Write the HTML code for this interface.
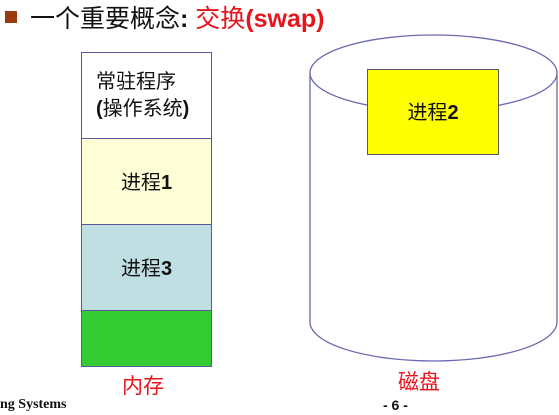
<!DOCTYPE html>
<html><head><meta charset="utf-8"><style>
body{margin:0;width:559px;height:415px;background:#fff;position:relative;overflow:hidden;font-family:"Liberation Sans","Noto Sans CJK SC",sans-serif}
.a{position:absolute}
.box{position:absolute;left:81px;width:131px;border-left:1.5px solid #5a5a9a;border-right:1.5px solid #5a5a9a;border-top:1.5px solid #5a5a9a;box-sizing:border-box;font-size:20px;color:#111;text-align:center}
.box span{display:block;line-height:24px}
</style></head><body>
<div class="a" style="left:5px;top:11px;width:12px;height:12px;background:#9b3a0e"></div>
<div class="a" style="left:30px;top:3px;font-size:25px;line-height:32px;color:#111;white-space:nowrap">一个重要概念<b>:</b> <span style="color:#e8141c">交换<b>(swap)</b></span></div>
<div class="box" style="top:52px;height:87px;background:#fff;text-align:left;padding:16px 0 0 14px"><span style="line-height:27px">常驻程序</span><span style="line-height:27px"><b>(</b>操作系统<b>)</b></span></div>
<div class="box" style="top:138px;height:87px;background:#fdfdd6;padding-top:32px"><span>进程<b>1</b></span></div>
<div class="box" style="top:224px;height:87px;background:#c0dfe2;padding-top:32px"><span>进程<b>3</b></span></div>
<div class="box" style="top:310px;height:57px;background:#33cc33;border-bottom:1.5px solid #5a5a9a"></div>
<svg class="a" style="left:0;top:0" width="559" height="415">
<path d="M310 73 V322 A123.5 39 0 0 0 557 322 V73" fill="none" stroke="#6a6ab0" stroke-width="1.3"/>
<ellipse cx="433.5" cy="73" rx="123.5" ry="38" fill="none" stroke="#6a6ab0" stroke-width="1.3"/>
</svg>
<div class="a" style="left:367px;top:69px;width:132px;height:86px;background:#ffff00;border:1.3px solid #55556a;box-sizing:border-box;font-size:20px;color:#111;text-align:center;padding-top:31px;line-height:24px">进程<b>2</b></div>
<div class="a" style="left:122px;top:370px;font-size:21px;color:#e8141c">内存</div>
<div class="a" style="left:398px;top:366px;font-size:21px;color:#e8141c">磁盘</div>
<div class="a" style="left:0;top:397px;font-family:'Liberation Serif',serif;font-weight:bold;font-size:14px;color:#111">ng Systems</div>
<div class="a" style="left:383px;top:397px;font-weight:bold;font-size:14px;color:#111">- 6 -</div>
</body></html>
